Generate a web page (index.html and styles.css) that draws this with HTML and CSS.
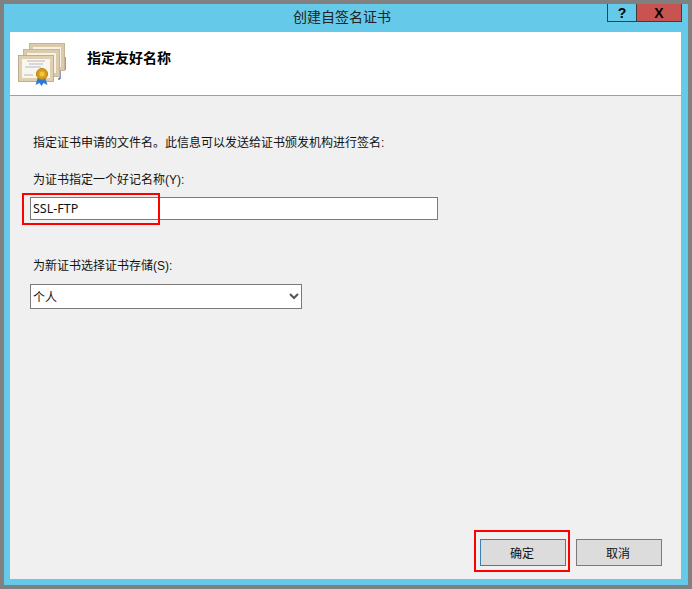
FILE: index.html
```html
<!DOCTYPE html>
<html lang="zh-CN">
<head>
<meta charset="utf-8">
<title>创建自签名证书</title>
<link rel="stylesheet" href="styles.css">
</head>
<body>
<div class="window">
  <div class="titlebar">
    <span class="title">创建自签名证书</span>
    <div class="controls">
      <div class="ctl help">?</div>
      <div class="ctl close">X</div>
    </div>
  </div>
  <div class="client">
    <header class="banner">
      <svg class="cert" width="48" height="44" viewBox="0 0 48 44">
        <path d="M47 14v13h-2M42 27v9h-2" fill="none" stroke="#23348a"/>
        <rect x="13" y="2" width="32" height="24" fill="#f7f2e6" stroke="#dccbaa" stroke-width="4"/>
        <rect x="11.500" y=".5" width="35" height="27" fill="none" stroke="#b8a98c" stroke-width=".6"/>
        <rect x="7" y="8" width="33" height="24" fill="#f7f2e6" stroke="#dccbaa" stroke-width="4"/>
        <rect x="5.500" y="6.500" width="36" height="27" fill="none" stroke="#b8a98c" stroke-width=".6"/>
        <rect x="2" y="14" width="32" height="23" fill="#f9f6ee" stroke="#e0d0b0" stroke-width="4"/>
        <rect x=".5" y="12.500" width="35" height="26" fill="none" stroke="#b0a080" stroke-width=".7"/>
        <path d="M9 18h18M11 21h14M7 24h16M6 32h9" stroke="#b4b8c8" fill="none"/>
        <path d="M20 34l-2.500 8 4-2 2 3 2-3 4 2-2.500-8z" fill="#2c79d6"/>
        <circle cx="24" cy="31" r="5.500" fill="#d9a015" stroke="#b47f10"/>
        <circle cx="24" cy="31" r="2.500" fill="#efc54f"/>
      </svg>
      <h1 class="heading">指定友好名称</h1>
    </header>
    <main class="content">
      <p class="intro">指定证书申请的文件名。此信息可以发送给证书颁发机构进行签名:</p>
      <label class="label name-label" for="name">为证书指定一个好记名称(Y):</label>
      <input id="name" class="field name" type="text" value="SSL-FTP">
      <label class="label store-label" for="store">为新证书选择证书存储(S):</label>
      <div class="select">
        <span id="store">个人</span>
        <svg class="chevron" width="10" height="7" viewBox="0 0 10 7"><path d="M1 1l4 4 4-4" fill="none" stroke="#555" stroke-width="2"/></svg>
      </div>
      <div class="actions">
        <button class="btn primary" type="button">确定</button>
        <button class="btn" type="button">取消</button>
      </div>
    </main>
  </div>
  <div class="mark mark-name"></div>
  <div class="mark mark-ok"></div>
</div>
</body>
</html>
```

FILE: styles.css
```css
* { box-sizing: border-box; }
html, body { margin: 0; padding: 0; }
body {
  width: 692px;
  height: 589px;
  overflow: hidden;
  font-family: "Liberation Sans", "Noto Sans CJK SC", sans-serif;
  font-size: 12px;
  color: #111;
}
.window {
  position: relative;
  width: 692px;
  height: 589px;
  border: 4px solid #808080;
  background: #65c9e9;
  padding: 0 7px 6px 6px;
  display: flex;
  flex-direction: column;
}
.titlebar {
  position: relative;
  height: 28px;
  flex: none;
  display: flex;
  justify-content: center;
  align-items: center;
}
.title {
  font-size: 14px;
  color: #222;
  margin-right: 7px;
  margin-top: -5px;
}
.controls {
  position: absolute;
  top: 0;
  right: -1px;
  display: flex;
}
.ctl {
  height: 18px;
  border: 1px solid #3c3c3c;
  border-top: 0;
  display: flex;
  align-items: center;
  justify-content: center;
  font-weight: bold;
  font-size: 14px;
  color: #000;
}
.help { width: 29px; border-right: 0; }
.close { width: 46px; background: #c75450; }
.client {
  flex: 1;
  background: #f0f0f0;
  display: flex;
  flex-direction: column;
}
.banner {
  height: 64px;
  flex: none;
  background: #fff;
  border-bottom: 1px solid #a0a0a0;
  display: flex;
  align-items: flex-start;
  padding: 11px 0 0 8px;
}
.cert { flex: none; }
.heading {
  margin: 6px 0 0 21px;
  font-size: 14px;
  line-height: 18px;
  font-weight: bold;
  color: #000;
}
.content {
  flex: 1;
  display: flex;
  flex-direction: column;
  align-items: flex-start;
  padding: 39px 19px 13px 20px;
}
.intro {
  margin: 0 0 0 3px;
  line-height: 16px;
}
.label { display: block; margin-left: 3px; line-height: 16px; }
.name-label { margin-top: 21px; }
.field {
  width: 408px;
  height: 23px;
  margin-top: 9px;
  border: 1px solid #7a7a7a;
  background: #fff;
  padding: 0 1px 0 2px;
  font: 12.5px "Noto Sans", "Noto Sans CJK SC", sans-serif;
  color: #111;
  border-radius: 0;
  outline: 0;
}
.store-label { margin-top: 38px; }
.select {
  width: 272px;
  height: 25px;
  margin-top: 10px;
  border: 1px solid #7a7a7a;
  background: #fff;
  display: flex;
  align-items: center;
  justify-content: space-between;
  padding: 0 2px 0 2px;
}
.actions {
  margin-top: auto;
  align-self: flex-end;
  display: flex;
  gap: 10px;
}
.btn {
  width: 86px;
  height: 27px;
  border: 1px solid #7a7a7a;
  background: #dcdcdc;
  font: 12px "Liberation Sans", "Noto Sans CJK SC", sans-serif;
  color: #111;
  padding: 0 2px 0 0;
}
.primary { border-color: #3c7fb1; }
.mark { position: absolute; border: 2px solid #f00; }
.mark-name { left: 18px; top: 189px; width: 138px; height: 32px; }
.mark-ok { left: 470px; top: 526px; width: 96px; height: 42px; }
```
